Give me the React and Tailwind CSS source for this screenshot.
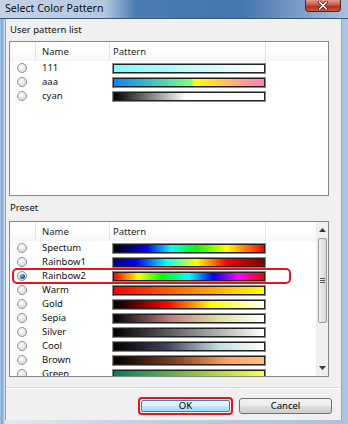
import React from "react";

const userPatterns = [
  { name: "111", bar: "bg-[linear-gradient(to_right,#7ff9ff,#ffffff)]" },
  {
    name: "aaa",
    bar: "bg-[linear-gradient(to_right,#0a84ff_0%,#40c0c0_25%,#80ff80_52%,#ffff00_53%,#ffd040_70%,#ffa090_85%,#ff80c0_100%)]",
  },
  { name: "cyan", bar: "bg-[linear-gradient(to_right,#000000_0%,#ffffff_48%,#ffffff_100%)]" },
];

const presets = [
  {
    name: "Spectum",
    bar: "bg-[linear-gradient(to_right,#000000_0%,#0000ff_22%,#00ffff_38%,#00ff00_55%,#ffff00_75%,#ff0000_100%)]",
  },
  {
    name: "Rainbow1",
    bar: "bg-[linear-gradient(to_right,#000080_0%,#0000ff_15%,#00ffff_35%,#ffff00_55%,#ff0000_75%,#800000_100%)]",
  },
  {
    name: "Rainbow2",
    checked: true,
    bar: "bg-[linear-gradient(to_right,#ff0000_0%,#ffff00_16%,#00ff00_32%,#00ffff_50%,#0000ff_66%,#ff00ff_83%,#ff0000_100%)]",
  },
  { name: "Warm", bar: "bg-[linear-gradient(to_right,#ff0000,#ffff00)]" },
  {
    name: "Gold",
    bar: "bg-[linear-gradient(to_right,#000000_0%,#ff0000_35%,#ffff00_65%,#ffffff_100%)]",
  },
  {
    name: "Sepia",
    bar: "bg-[linear-gradient(to_right,#000000_0%,#c08080_38%,#e0e0a0_70%,#ffffff_100%)]",
  },
  { name: "Silver", bar: "bg-[linear-gradient(to_right,#000000,#ffffff)]" },
  {
    name: "Cool",
    bar: "bg-[linear-gradient(to_right,#000000_0%,#404060_35%,#c0e0e0_70%,#ffffff_100%)]",
  },
  {
    name: "Brown",
    bar: "bg-[linear-gradient(to_right,#000000_0%,#804020_40%,#ffa060_75%,#ffc080_100%)]",
  },
  {
    name: "Green",
    bar: "bg-[linear-gradient(to_right,#008060_0%,#80c040_50%,#ffff40_100%)]",
  },
];

function Radio({ checked }) {
  return (
    <span className="ml-[7px] w-[10px] h-[10px] rounded-full border border-[#8e8f8f] bg-[radial-gradient(circle_at_40%_35%,#ffffff_0%,#e6e6e6_55%,#cfcfcf_100%)] flex items-center justify-center">
      {checked ? (
        <span className="w-[5px] h-[5px] rounded-full bg-[radial-gradient(circle_at_40%_35%,#7fc6ff_0%,#1a6ab8_45%,#0b2f5c_100%)]"></span>
      ) : null}
    </span>
  );
}

function Row({ item }) {
  return (
    <div className="flex items-center h-[14px] shrink-0">
      <div className="w-[26px] flex items-center">
        <Radio checked={item.checked} />
      </div>
      <div className="w-[74px] pl-[6px] text-[#111]">{item.name}</div>
      <div className="pl-[2px]">
        <div className="w-[154px] h-[11px] border border-[#8a8a8a] p-0">
          <div className={`w-full h-full border border-[#222] ${item.bar}`}></div>
        </div>
      </div>
    </div>
  );
}

function Header() {
  return (
    <div className="flex h-[19px] shrink-0 bg-[linear-gradient(#ffffff_0%,#ffffff_50%,#f4f5f6_100%)] text-[#1e1e1e]">
      <div className="w-[26px] border-r border-[#e3e6ea]"></div>
      <div className="w-[74px] pl-[6px] flex items-center border-r border-[#e3e6ea]">Name</div>
      <div className="w-[156px] pl-[3px] flex items-center border-r border-[#e3e6ea]">Pattern</div>
      <div className="flex-1"></div>
    </div>
  );
}

function ScrollBar() {
  return (
    <div className="w-[12px] flex flex-col bg-[#f0f0f0] border-l border-[#ececec]">
      <div className="h-[16px] flex items-center justify-center">
        <svg width="7" height="4" viewBox="0 0 7 4">
          <path d="M0 4 L3.5 0 L7 4 Z" fill="#3a3a3a" />
        </svg>
      </div>
      <div className="h-[85px] mx-[1px] rounded-[2px] border border-[#9a9a9a] bg-[linear-gradient(to_right,#f2f2f2,#e2e2e2_50%,#d4d4d4)] flex items-center justify-center">
        <div className="flex flex-col gap-[1px]">
          <div className="w-[5px] h-[1px] bg-[#555]"></div>
          <div className="w-[5px] h-[1px] bg-[#555]"></div>
          <div className="w-[5px] h-[1px] bg-[#555]"></div>
        </div>
      </div>
      <div className="flex-1"></div>
      <div className="h-[16px] flex items-center justify-center">
        <svg width="7" height="4" viewBox="0 0 7 4">
          <path d="M0 0 L7 0 L3.5 4 Z" fill="#3a3a3a" />
        </svg>
      </div>
    </div>
  );
}

export default function App() {
  return (
    <div
      className="w-[348px] h-[424px] flex flex-col overflow-hidden bg-[linear-gradient(to_right,#c9d9ea_0px,#7ea8d6_1px,#8fb4dc_3px,#dfe8f2_5px,#b7cde4_50%,#a9c4e0_100%)] text-[9.5px] leading-[14px] text-black"
      style={{ fontFamily: '"Noto Sans", "Open Sans", sans-serif' }}
    >
      {/* title bar */}
      <div className="h-[19px] shrink-0 flex justify-between bg-[linear-gradient(to_right,#c3d3e5_0%,#b3c8df_30%,#4b7bb2_39%,#4576af_70%,#87a8cd_90%,#a8c2dd_100%)] border-b border-[#3c5a7c]">
        <div className="pl-[5px] pt-[1px] text-[10.6px] leading-[14px] text-[#0c0c0c]">Select Color Pattern</div>
        <div className="mr-[7px] w-[36px] h-[12px] rounded-b-[4px] border border-t-0 border-[#5b2020] bg-[linear-gradient(#e09a8c_0%,#c9584a_45%,#b0301f_60%,#c85a40_100%)] flex items-center justify-center">
          <svg width="10" height="9" viewBox="0 0 10 9">
            <path d="M1.5 1 L8.5 8 M8.5 1 L1.5 8" stroke="#3b1a1a" strokeWidth="3" strokeLinecap="round" />
            <path d="M1.5 1 L8.5 8 M8.5 1 L1.5 8" stroke="#ffffff" strokeWidth="1.6" strokeLinecap="round" />
          </svg>
        </div>
      </div>

      {/* client area */}
      <div className="ml-[5px] mr-[6px] h-[401px] shrink-0 bg-[#f0f0f0] border-x border-[#8ea6c0] flex flex-col">
        <div className="pl-[4px] pt-[4px] text-[#111]">User pattern list</div>
        <div className="ml-[3px] mt-[4px] w-[320px] h-[155px] border border-[#828790] bg-white flex flex-col">
          <Header />
          {userPatterns.map((p) => (
            <Row key={p.name} item={p} />
          ))}
        </div>

        <div className="pl-[4px] mt-[5px] text-[#111]">Preset</div>
        <div className="relative ml-[3px] mt-[6px] w-[320px] h-[156px] border border-[#828790] bg-white flex">
          <div className="flex-1 flex flex-col overflow-hidden">
            <Header />
            {presets.map((p) => (
              <Row key={p.name} item={p} />
            ))}
          </div>
          <ScrollBar />
          <div className="absolute left-[2px] top-[46px] w-[279px] h-[16px] border-2 border-[#e8141c] rounded-[5px]"></div>
        </div>

        <div className="mt-[10px] h-[2px] border-t border-[#d8d8d8] bg-white"></div>

        <div className="mt-[8px] flex justify-end gap-[6px] pr-[9px]">
          <div className="w-[95px] h-[18px] border-2 border-[#e8141c] rounded-[4px] p-[1px]">
            <div className="w-full h-full rounded-[2px] border border-[#3c7fb1] bg-[linear-gradient(#eaf6fd_0%,#d9f0fc_50%,#bee6fd_51%,#a7d9f5_100%)] flex items-center justify-center leading-none">
              OK
            </div>
          </div>
          <div className="mt-[1px] w-[93px] h-[16px] rounded-[3px] border border-[#707070] bg-[linear-gradient(#f2f2f2_0%,#ebebeb_50%,#dddddd_51%,#cfcfcf_100%)] flex items-center justify-center leading-none">
            Cancel
          </div>
        </div>
      </div>
    </div>
  );
}
